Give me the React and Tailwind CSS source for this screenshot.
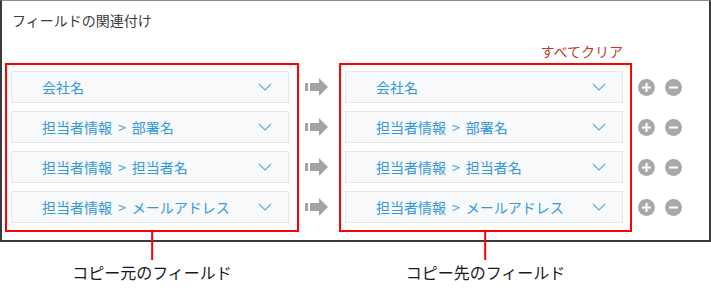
import React from "react";

const rows = [
  "会社名",
  "担当者情報 > 部署名",
  "担当者情報 > 担当者名",
  "担当者情報 > メールアドレス",
];

function Select({ label }) {
  const parts = label.split(" > ");
  return (
    <div className="flex h-[32px] w-[278px] items-center justify-between border border-[#e3e7e8] bg-[#f7f9fa] pl-[30px] pr-[16px]">
      <span className="flex items-center whitespace-nowrap text-[14px] leading-[20px] text-[#3498db]">
        {parts.map((p, i) => (
          <React.Fragment key={i}>
            {i > 0 && <span className="mx-[6px]">&gt;</span>}
            <span>{p}</span>
          </React.Fragment>
        ))}
      </span>
      <svg width="14" height="8" viewBox="0 0 14 8" className="shrink-0">
        <polyline points="1,1 7,7 13,1" fill="none" stroke="#5aa9e0" strokeWidth="1.1" />
      </svg>
    </div>
  );
}

function Arrow() {
  return (
    <svg width="23" height="18" viewBox="0 0 23 18">
      <rect x="0" y="5" width="3" height="8" fill="#a3a3a3" />
      <rect x="5" y="5" width="10" height="8" fill="#a3a3a3" />
      <polygon points="14,0 23,9 14,18" fill="#a3a3a3" />
    </svg>
  );
}

function Circle({ minus }) {
  return (
    <svg width="17" height="17" viewBox="0 0 17 17">
      <circle cx="8.5" cy="8.5" r="8.5" fill="#a8a8a8" />
      <rect x="4" y="7.5" width="9" height="2" fill="#fff" />
      {!minus && <rect x="7.5" y="4" width="2" height="9" fill="#fff" />}
    </svg>
  );
}

function RedBox({ label, width }) {
  return (
    <div className={`relative flex flex-col gap-2 border-2 border-[#f00] pb-[7px] pl-[4px] pt-[6px] ${width}`}>
      {rows.map((r) => (
        <Select key={r} label={r} />
      ))}
      <div className="absolute left-1/2 top-full flex -translate-x-1/2 flex-col items-center">
        <div className="h-[30px] w-[2px] bg-[#f00]" />
        <div className="whitespace-nowrap text-[16px] leading-[24px] text-[#1a1a1a]">{label}</div>
      </div>
    </div>
  );
}

export default function App() {
  return (
    <div
      className="h-[297px] w-[711px] bg-white"
      style={{ fontFamily: '"Noto Sans CJK JP", "Noto Sans", sans-serif' }}
    >
      <div className="h-[242px] w-[711px] border-x-2 border-b-2 border-t border-[#3a3a3a] border-t-[#8a8a8a]">
        <div className="pl-[10px] pt-[9px] text-[14px] leading-[20px] text-[#3c3c3c]">フィールドの関連付け</div>
        <div className="mt-[11px] flex justify-end pr-[86px] text-[14px] leading-[20px] text-[#c0392b]">
          すべてクリア
        </div>
        <div className="ml-[3px] mt-[2px] flex items-start">
          <RedBox label="コピー元のフィールド" width="w-[294px]" />
          <div className="flex w-[40px] flex-col gap-2 pl-[6px] pt-[8px]">
            {rows.map((r) => (
              <div key={r} className="flex h-[32px] items-center">
                <Arrow />
              </div>
            ))}
          </div>
          <RedBox label="コピー先のフィールド" width="w-[293px]" />
          <div className="flex flex-col gap-2 pl-[6px] pt-[8px]">
            {rows.map((r) => (
              <div key={r} className="flex h-[32px] items-center gap-[10px]">
                <Circle />
                <Circle minus />
              </div>
            ))}
          </div>
        </div>
      </div>
    </div>
  );
}
